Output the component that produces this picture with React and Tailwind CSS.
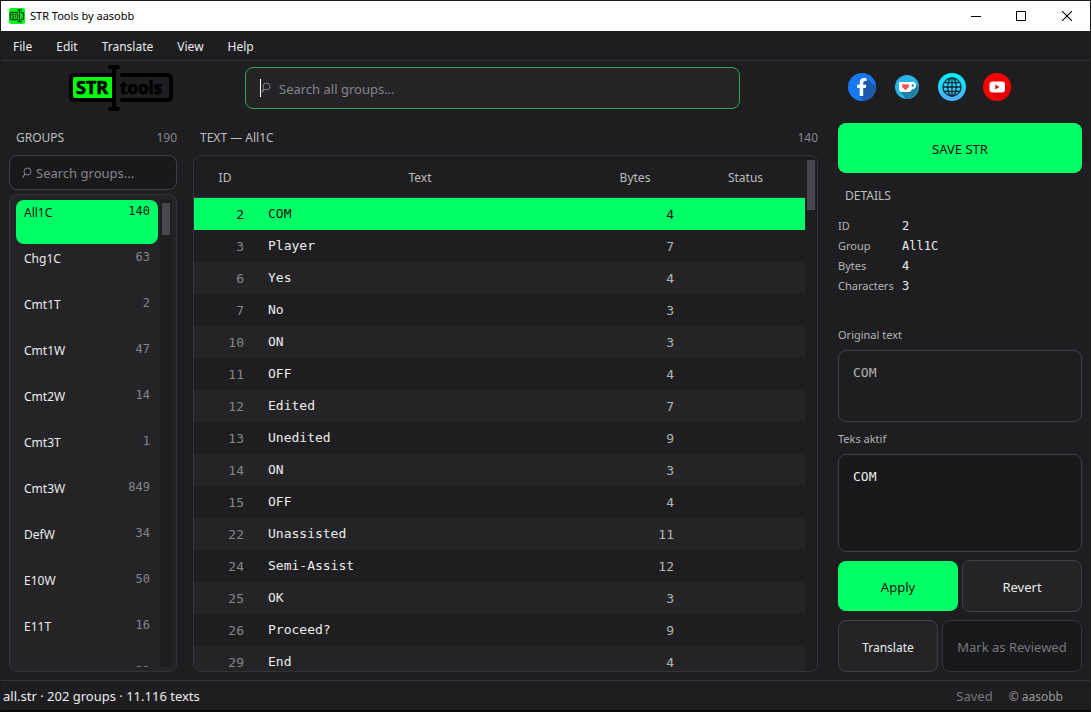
import React, { useState } from "react";

const groups = [
  ["All1C", 140], ["Chg1C", 63], ["Cmt1T", 2], ["Cmt1W", 47], ["Cmt2W", 14], ["Cmt3T", 1],
  ["Cmt3W", 849], ["DefW", 34], ["E10W", 50], ["E11T", 16], ["E11W", 22],
];

const rows = [
  [2, "COM", 4], [3, "Player", 7], [6, "Yes", 4], [7, "No", 3], [10, "ON", 3], [11, "OFF", 4],
  [12, "Edited", 7], [13, "Unedited", 9], [14, "ON", 3], [15, "OFF", 4], [22, "Unassisted", 11],
  [24, "Semi-Assist", 12], [25, "OK", 3], [26, "Proceed?", 9], [29, "End", 4],
];

const details = [["ID", "2"], ["Group", "All1C"], ["Bytes", "4"], ["Characters", "3"]];

const mono = "font-['DejaVu_Sans_Mono',monospace]";

function AppIcon() {
  return (
    <svg width="16" height="16" viewBox="0 0 16 16" aria-hidden="true">
      <rect width="16" height="16" rx="2.5" fill="#00f81c" />
      <path d="M9 4.5H2.8Q1.2 4.5 1.2 6v4q0 1.5 1.6 1.5H9M12 4.5h.7q1.8 0 1.8 1.5v4q0 1.500-1.800 1.500H12M8.500 1.800h4M8.500 13.500h4M10.500 1.800v11.700" fill="none" stroke="#063f0b" strokeWidth="1.300" />
      <path d="M5 6.300H3.200v1.700h1.600v1.700H3M5.600 6.300h2.200M6.700 6.300v3.500M8.500 10V6.500h1" fill="none" stroke="#063f0b" strokeWidth="0.900" />
    </svg>
  );
}

function Logo() {
  return (
    <svg width="104" height="46" viewBox="0 0 104 46" role="img" aria-label="STR tools">
      <rect x="3" y="11" width="40" height="23" fill="#00ff0c" />
      <path d="M45 10H6Q2 10 2 14v17q0 4 4 4h39" fill="none" stroke="#000" strokeWidth="4" />
      <path d="M53 10h45q4 0 4 4v17q0 4-4 4H53" fill="none" stroke="#000" strokeWidth="4" strokeLinecap="round" />
      <path d="M41 2h8M41 44h8" stroke="#000" strokeWidth="4" strokeLinecap="round" />
      <path d="M45 2v42" stroke="#000" strokeWidth="4" />
      <g fontFamily="'Open Sans', sans-serif" fontWeight="700" stroke="#000" strokeWidth="0.700" strokeLinejoin="round">
        <text x="7" y="29" fontSize="18">STR</text>
        <text x="51" y="29" fontSize="17">tools</text>
      </g>
    </svg>
  );
}

function SearchGlyph({ className }) {
  return (
    <svg width="10" height="12" viewBox="0 0 10 12" className={className} aria-hidden="true">
      <circle cx="5.500" cy="4.500" r="3.500" fill="none" stroke="currentColor" />
      <path d="M3 7L.8 10.500" stroke="currentColor" strokeWidth="1.200" />
    </svg>
  );
}

function FacebookIcon() {
  return (
    <svg width="28" height="28" viewBox="0 0 28 28" aria-hidden="true">
      <clipPath id="fbc"><circle cx="14" cy="14" r="14" /></clipPath>
      <g clipPath="url(#fbc)">
        <rect width="28" height="28" fill="#1877f2" />
        <path d="M18.500 5L32 18v14H20l-8.500-9L16 9z" fill="#1b5aad" />
        <path d="M11.700 23v-8H9v-3.300h2.700V9.500c0-3 1.600-4.600 4.300-4.600 1.200 0 2.500.2 2.500.2V8h-1.400c-1.400 0-1.900.8-1.900 1.800v1.900h3.100L17.800 15h-2.600v8z" fill="#fff" />
      </g>
    </svg>
  );
}

function KofiIcon() {
  return (
    <svg width="24" height="24" viewBox="0 0 24 24" aria-hidden="true">
      <clipPath id="kfc"><circle cx="12" cy="12" r="12" /></clipPath>
      <g clipPath="url(#kfc)">
        <rect width="24" height="24" fill="#29b5ea" />
        <path d="M20 8l8 8v12H14L5 16.500z" fill="#2080a5" />
        <path d="M4 7h13.500q3.500 0 3.500 3.500T17 14.200q-.7 2.800-3.200 2.800H7q-3 0-3-3z" fill="#fff" />
        <path d="M16.800 9h.8q1.400 0 1.400 1.500T17.300 12h-.5z" fill="#29a5d5" />
        <path d="M10.500 15.300L7.500 12.300q-1.200-1.500 0-2.700 1.600-1.200 3 .4 1.400-1.600 3-.4 1.200 1.200 0 2.700z" fill="#fb5550" />
      </g>
    </svg>
  );
}

function GlobeIcon() {
  return (
    <svg width="28" height="28" viewBox="0 0 28 28" aria-hidden="true">
      <linearGradient id="glb" x1="0" y1="0" x2="0" y2="1">
        <stop offset="0" stopColor="#00f2fe" />
        <stop offset="1" stopColor="#4facfe" />
      </linearGradient>
      <circle cx="14" cy="14" r="14" fill="url(#glb)" />
      <g fill="none" stroke="#15282f" strokeWidth="1.300">
        <circle cx="14" cy="14" r="9" />
        <ellipse cx="14" cy="14" rx="4.300" ry="9" />
        <path d="M14 5v18M5 14h18M6.500 9.700h15M6.500 18.300h15" />
      </g>
    </svg>
  );
}

function YoutubeIcon() {
  return (
    <svg width="28" height="28" viewBox="0 0 28 28" aria-hidden="true">
      <clipPath id="ytc"><circle cx="14" cy="14" r="14" /></clipPath>
      <g clipPath="url(#ytc)">
        <rect width="28" height="28" fill="#ff0000" />
        <path d="M21 9l9 9v12H16L7 18.500z" fill="#e60000" />
        <rect x="6.500" y="8.500" width="15.500" height="11" rx="3" fill="#fff" />
        <path d="M12.300 11.500v5l4.200-2.500z" fill="#c81414" />
      </g>
    </svg>
  );
}

const socials = [
  ["Facebook", FacebookIcon], ["Ko-fi", KofiIcon], ["Website", GlobeIcon], ["YouTube", YoutubeIcon],
];

function TitleBar() {
  return (
    <header className="flex h-[30px] shrink-0 items-center bg-white pl-2 text-black">
      <AppIcon />
      <h1 className="flex-1 pl-[5px] text-[11px]">STR Tools by aasobb</h1>
      <button aria-label="Minimize" className="flex h-full w-[45px] items-center justify-center">
        <svg width="10" height="10" viewBox="0 0 10 10"><path d="M0 5.500h10" stroke="#000" /></svg>
      </button>
      <button aria-label="Maximize" className="flex h-full w-[46px] items-center justify-center">
        <svg width="10" height="10" viewBox="0 0 10 10"><path d="M.5.5h9v9h-9z" fill="none" stroke="#000" /></svg>
      </button>
      <button aria-label="Close" className="flex h-full w-[46px] items-center justify-center">
        <svg width="10" height="10" viewBox="0 0 10 10"><path d="M0 0l10 10M10 0L0 10" stroke="#000" strokeWidth="1.100" /></svg>
      </button>
    </header>
  );
}

export default function App() {
  const [active, setActive] = useState("COM");
  return (
    <div className="flex h-screen flex-col border-x border-t border-b-2 border-[#1b1b1d] border-b-[#09090a] bg-[#1e1e20] font-['Noto_Sans','Open_Sans',sans-serif] text-[12px] text-[#ececec]">
      <TitleBar />
      <nav className="flex h-[30px] shrink-0 items-center gap-6 border-b border-[#333338] px-3 pt-0.5">
        {["File", "Edit", "Translate", "View", "Help"].map((m) => (
          <button key={m}>{m}</button>
        ))}
      </nav>

      <div className="grid h-[62px] shrink-0 grid-cols-[236px_1fr_342px] items-start px-2">
        <div className="pt-1 pl-[60px]"><Logo /></div>
        <div className="pt-1.5">
          <label className="flex h-[42px] items-center rounded-lg border border-[#25a855] bg-[#242427] px-3.5 text-[#85858a]">
            <span className="h-[18px] w-px bg-white" />
            <SearchGlyph />
            <input aria-label="Search all groups" placeholder="Search all groups..." className="min-w-0 flex-1 bg-transparent pt-1 pl-2 text-[13px] outline-none placeholder:text-[#85858a]" />
          </label>
        </div>
        <div className="flex items-center gap-[17px] pt-3 pl-[108px]">
          {socials.map(([name, Icon]) => (
            <a key={name} href="#" aria-label={name} className="flex size-7 items-center justify-center"><Icon /></a>
          ))}
        </div>
      </div>

      <main className="flex min-h-0 flex-1 px-2 pb-2">
        <section className="mr-4 flex w-[168px] shrink-0 flex-col">
          <div className="flex h-8 shrink-0 items-center justify-between pb-0.5 pl-[7px]">
            <h2 className="text-[#bdbdbd]">GROUPS</h2>
            <span className="text-[#85858a]">190</span>
          </div>
          <label className="flex h-[35px] shrink-0 items-center rounded-lg border border-[#3f3f46] bg-[#19191b] px-3 text-[#85858a]">
            <SearchGlyph />
            <input aria-label="Search groups" placeholder="Search groups..." className="min-w-0 flex-1 bg-transparent pt-0.5 pl-1 text-[13px] outline-none placeholder:text-[#85858a]" />
          </label>
          <div className="mt-1 flex min-h-0 flex-1 rounded-lg border border-[#333338] bg-[#242427] py-1 pr-1 pl-1.5">
            <ul className="flex min-w-0 flex-1 flex-col gap-0.5 overflow-y-auto pt-px [scrollbar-width:none]">
              {groups.map(([name, n], i) => (
                <li key={name} className="shrink-0">
                  <button className={i === 0 ? "flex h-11 w-full items-start justify-between rounded-lg bg-[#00ff66] px-2 text-[#111]" : "flex h-11 w-full items-start justify-between px-2"}>
                    <span className="pt-[5px] leading-4">{name}</span>
                    <span className={i === 0 ? `${mono} pt-[3px] leading-4` : `${mono} pt-[3px] leading-4 text-[#85858a]`}>{n}</span>
                  </button>
                </li>
              ))}
            </ul>
            <div className="ml-0.5 w-3 shrink-0 bg-[#1e1e20] px-0.5 pt-1"><div className="h-8 bg-[#47474f]" /></div>
          </div>
        </section>

        <section className="flex min-w-0 flex-1 flex-col">
          <div className="flex h-8 shrink-0 items-center justify-between pb-0.5 pl-[7px]">
            <h2 className="text-[#bdbdbd]">TEXT — All1C</h2>
            <span className="text-[#85858a]">140</span>
          </div>
          <div className="flex min-h-0 flex-1 overflow-hidden rounded-lg border border-[#333338]">
            <div className="min-w-0 flex-1 overflow-y-auto [scrollbar-width:none]">
              <table className="w-full table-fixed border-separate border-spacing-0">
                <thead className="text-[#bdbdbd]">
                  <tr className="h-[42px]">
                    <th className="sticky top-0 w-[62px] border-b border-[#333338] bg-[#1e1e20] pt-0.5 font-normal">ID</th>
                    <th className="sticky top-0 border-b border-[#333338] bg-[#1e1e20] pt-0.5 font-normal">Text</th>
                    <th className="sticky top-0 w-[102px] border-b border-[#333338] bg-[#1e1e20] pt-0.5 font-normal">Bytes</th>
                    <th className="sticky top-0 w-[119px] border-b border-[#333338] bg-[#1e1e20] pt-0.5 font-normal">Status</th>
                  </tr>
                </thead>
                <tbody className={`${mono} text-[13px]`}>
                  {rows.map(([id, text, bytes], i) => (
                    <tr key={id} className={i === 0 ? "h-8 bg-[#00ff66] text-[#111]" : i % 2 ? "h-8" : "h-8 bg-[#242427]"}>
                      <td className={i === 0 ? "px-3 pt-0.5 text-right" : "px-3 pt-0.5 text-right text-[#85858a]"}>{id}</td>
                      <td className="px-3">{text}</td>
                      <td className={i === 0 ? "px-3 pt-0.5 text-right" : "px-3 pt-0.5 text-right text-[#b4b4b4]"}>{bytes}</td>
                      <td />
                    </tr>
                  ))}
                </tbody>
              </table>
            </div>
            <div className="w-3 shrink-0 px-0.5 pt-1"><div className="h-[50px] bg-[#47474f]" /></div>
          </div>
        </section>

        <aside className="ml-5 flex w-[244px] shrink-0 flex-col">
          <button className="h-[50px] shrink-0 rounded-lg bg-[#00ff66] pt-1 text-[13px] text-[#111]">SAVE STR</button>
          <h2 className="mt-[13px] pl-[7px] leading-5 text-[#bdbdbd]">DETAILS</h2>
          <dl className="mt-2.5 grid grid-cols-[64px_1fr] leading-5">
            {details.map(([k, v]) => (
              <React.Fragment key={k}>
                <dt className="text-[11px] leading-5 text-[#b4b4b4]">{k}</dt>
                <dd className={mono}>{v}</dd>
              </React.Fragment>
            ))}
          </dl>
          <label htmlFor="original" className="mt-[29px] text-[11px] leading-5 text-[#b4b4b4]">Original text</label>
          <textarea id="original" readOnly value="COM" className={`${mono} mt-[5px] h-[72px] shrink-0 resize-none rounded-lg border border-[#3f3f46] bg-transparent px-3.5 py-3 text-[13px] leading-5 text-[#b4b4b4] outline-none`} />
          <label htmlFor="active" className="mt-[7px] text-[11px] leading-5 text-[#b4b4b4]">Teks aktif</label>
          <textarea id="active" value={active} onChange={(e) => setActive(e.target.value)} className={`${mono} mt-[5px] min-h-0 flex-1 resize-none rounded-lg border border-[#3f3f46] bg-[#19191b] px-3.5 py-3 text-[13px] leading-5 outline-none`} />
          <div className="mt-2 grid shrink-0 grid-cols-2 items-center gap-1 text-[13px]">
            <button className="h-[50px] rounded-lg bg-[#00ff66] pt-1 text-[#111]">Apply</button>
            <button className="h-[52px] rounded-lg border border-[#3f3f46] bg-[#242427] pt-1">Revert</button>
          </div>
          <div className="mt-2 grid shrink-0 grid-cols-[100px_1fr] gap-1 text-[13px]">
            <button className="h-[52px] rounded-lg border border-[#3f3f46] bg-[#242427] pt-1 text-[12px]">Translate</button>
            <button disabled className="h-[52px] rounded-lg border border-[#333338] bg-[#19191b] pt-1 text-[#77777c]">Mark as Reviewed</button>
          </div>
        </aside>
      </main>

      <footer className="flex h-[30px] shrink-0 items-center border-t border-[#333338] pt-0.5 pr-[27px] pl-0.5">
        <span className="flex-1 text-[13px]">all.str · 202 groups · 11.116 texts</span>
        <span className="text-[13px] text-[#77777c]">Saved</span>
        <span className="ml-4 text-[#9a9a9a]">© aasobb</span>
      </footer>
    </div>
  );
}
